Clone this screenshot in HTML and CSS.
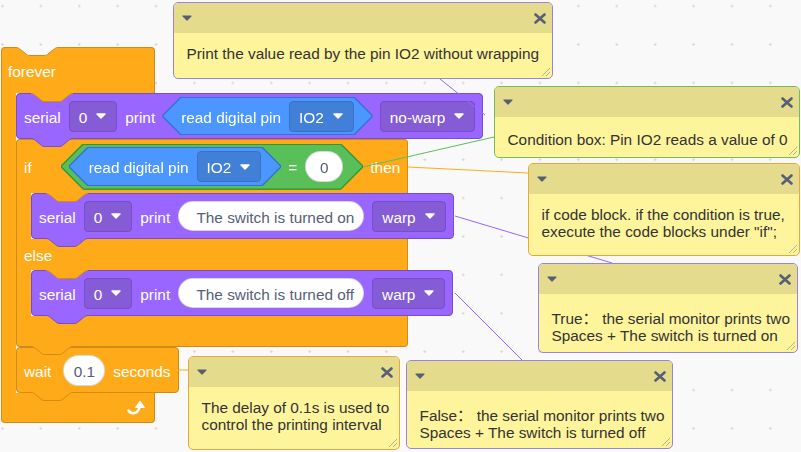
FILE: index.html
```html
<!DOCTYPE html>
<html>
<head>
<meta charset="utf-8">
<link rel="stylesheet" href="styles.css">
</head>
<body>
<div class="workspace">
  <div class="script">
    <div class="cblock">
      <div class="chead fhead orange">
        <svg class="dent" width="42" height="10" viewBox="0 0 42 10"><path class="f-canvas" d="M0,0 L42,0 L42,0.5 C40,0.5 39,1.5 37.5,2.5 L32,7 C31,8 30,8.5 28,8.5 H14 C12,8.5 11,8 10,7 L4.5,2.5 C3,1.5 2,0.5 0,0.5 Z"/><path class="s-orange" d="M0,0.5 C2,0.5 3,1.5 4.5,2.5 L10,7 C11,8 12,8.5 14,8.5 H28 C30,8.5 31,8 32,7 L37.5,2.5 C39,1.5 40,0.5 42,0.5"/></svg>
        <span class="lbl">forever</span>
        <svg class="tab tab-arm" width="42" height="10" viewBox="0 0 42 10"><path class="f-orange" d="M0,0 L42,0 L42,0.5 C40,0.5 39,1.5 37.5,2.5 L32,7 C31,8 30,8.5 28,8.5 H14 C12,8.5 11,8 10,7 L4.5,2.5 C3,1.5 2,0.5 0,0.5 Z"/><path class="s-orange" d="M0,0.5 C2,0.5 3,1.5 4.5,2.5 L10,7 C11,8 12,8.5 14,8.5 H28 C30,8.5 31,8 32,7 L37.5,2.5 C39,1.5 40,0.5 42,0.5"/></svg>
      </div>
      <div class="cbody">
        <div class="arm"></div>
        <div class="stack">
          <div class="blk purple">
            <span class="lbl">serial</span>
            <span class="dd dd-purple">0<svg class="caret" width="10" height="6" viewBox="0 0 10 6"><path d="M1,1 L9,1 L5,5 Z"/></svg></span>
            <span class="lbl">print</span>
            <span class="hexw hexw-blue"><span class="hex hex-blue">
              <span class="lbl">read digital pin</span>
              <span class="dd dd-blue">IO2<svg class="caret" width="10" height="6" viewBox="0 0 10 6"><path d="M1,1 L9,1 L5,5 Z"/></svg></span>
            </span></span>
            <span class="dd dd-purple">no-warp<svg class="caret" width="10" height="6" viewBox="0 0 10 6"><path d="M1,1 L9,1 L5,5 Z"/></svg></span>
            <svg class="tab" width="42" height="10" viewBox="0 0 42 10"><path class="f-purple" d="M0,0 L42,0 L42,0.5 C40,0.5 39,1.5 37.5,2.5 L32,7 C31,8 30,8.5 28,8.5 H14 C12,8.5 11,8 10,7 L4.5,2.5 C3,1.5 2,0.5 0,0.5 Z"/><path class="s-purple" d="M0,0.5 C2,0.5 3,1.5 4.5,2.5 L10,7 C11,8 12,8.5 14,8.5 H28 C30,8.5 31,8 32,7 L37.5,2.5 C39,1.5 40,0.5 42,0.5"/></svg>
          </div>

          <div class="cblock">
            <div class="chead ihead orange">
              <span class="lbl lbl-if">if</span>
              <span class="hexw hexw-green"><span class="hex hex-green">
                <span class="hexw hexw-blue"><span class="hex hex-blue hex-blue2">
                  <span class="lbl">read digital pin</span>
                  <span class="dd dd-blue">IO2<svg class="caret" width="10" height="6" viewBox="0 0 10 6"><path d="M1,1 L9,1 L5,5 Z"/></svg></span>
                </span></span>
                <span class="lbl">=</span>
                <span class="oval oval-num">0</span>
              </span></span>
              <span class="lbl">then</span>
              <svg class="tab tab-arm" width="42" height="10" viewBox="0 0 42 10"><path class="f-orange" d="M0,0 L42,0 L42,0.5 C40,0.5 39,1.5 37.5,2.5 L32,7 C31,8 30,8.5 28,8.5 H14 C12,8.5 11,8 10,7 L4.5,2.5 C3,1.5 2,0.5 0,0.5 Z"/><path class="s-orange" d="M0,0.5 C2,0.5 3,1.5 4.5,2.5 L10,7 C11,8 12,8.5 14,8.5 H28 C30,8.5 31,8 32,7 L37.5,2.5 C39,1.5 40,0.5 42,0.5"/></svg>
            </div>
            <div class="cbody">
              <div class="arm"></div>
              <div class="stack">
                <div class="blk purple">
                  <span class="lbl">serial</span>
                  <span class="dd dd-purple">0<svg class="caret" width="10" height="6" viewBox="0 0 10 6"><path d="M1,1 L9,1 L5,5 Z"/></svg></span>
                  <span class="lbl">print</span>
                  <span class="oval oval-text">  The switch is turned on</span>
                  <span class="dd dd-purple">warp<svg class="caret" width="10" height="6" viewBox="0 0 10 6"><path d="M1,1 L9,1 L5,5 Z"/></svg></span>
                  <svg class="tab" width="42" height="10" viewBox="0 0 42 10"><path class="f-purple" d="M0,0 L42,0 L42,0.5 C40,0.5 39,1.5 37.5,2.5 L32,7 C31,8 30,8.5 28,8.5 H14 C12,8.5 11,8 10,7 L4.5,2.5 C3,1.5 2,0.5 0,0.5 Z"/><path class="s-purple" d="M0,0.5 C2,0.5 3,1.5 4.5,2.5 L10,7 C11,8 12,8.5 14,8.5 H28 C30,8.5 31,8 32,7 L37.5,2.5 C39,1.5 40,0.5 42,0.5"/></svg>
                </div>
              </div>
            </div>
            <div class="cmid orange">
              <span class="lbl">else</span>
              <svg class="tab tab-arm" width="42" height="10" viewBox="0 0 42 10"><path class="f-orange" d="M0,0 L42,0 L42,0.5 C40,0.5 39,1.5 37.5,2.5 L32,7 C31,8 30,8.5 28,8.5 H14 C12,8.5 11,8 10,7 L4.5,2.5 C3,1.5 2,0.5 0,0.5 Z"/><path class="s-orange" d="M0,0.5 C2,0.5 3,1.5 4.5,2.5 L10,7 C11,8 12,8.5 14,8.5 H28 C30,8.5 31,8 32,7 L37.5,2.5 C39,1.5 40,0.5 42,0.5"/></svg>
            </div>
            <div class="cbody">
              <div class="arm"></div>
              <div class="stack">
                <div class="blk purple">
                  <span class="lbl">serial</span>
                  <span class="dd dd-purple">0<svg class="caret" width="10" height="6" viewBox="0 0 10 6"><path d="M1,1 L9,1 L5,5 Z"/></svg></span>
                  <span class="lbl">print</span>
                  <span class="oval oval-text">  The switch is turned off</span>
                  <span class="dd dd-purple">warp<svg class="caret" width="10" height="6" viewBox="0 0 10 6"><path d="M1,1 L9,1 L5,5 Z"/></svg></span>
                  <svg class="tab" width="42" height="10" viewBox="0 0 42 10"><path class="f-purple" d="M0,0 L42,0 L42,0.5 C40,0.5 39,1.5 37.5,2.5 L32,7 C31,8 30,8.5 28,8.5 H14 C12,8.5 11,8 10,7 L4.5,2.5 C3,1.5 2,0.5 0,0.5 Z"/><path class="s-purple" d="M0,0.5 C2,0.5 3,1.5 4.5,2.5 L10,7 C11,8 12,8.5 14,8.5 H28 C30,8.5 31,8 32,7 L37.5,2.5 C39,1.5 40,0.5 42,0.5"/></svg>
                </div>
              </div>
            </div>
            <div class="cfoot ifoot orange">
              <svg class="tab" width="42" height="10" viewBox="0 0 42 10"><path class="f-orange" d="M0,0 L42,0 L42,0.5 C40,0.5 39,1.5 37.5,2.5 L32,7 C31,8 30,8.5 28,8.5 H14 C12,8.5 11,8 10,7 L4.5,2.5 C3,1.5 2,0.5 0,0.5 Z"/><path class="s-orange" d="M0,0.5 C2,0.5 3,1.5 4.5,2.5 L10,7 C11,8 12,8.5 14,8.5 H28 C30,8.5 31,8 32,7 L37.5,2.5 C39,1.5 40,0.5 42,0.5"/></svg>
            </div>
          </div>

          <div class="blk orange wait">
            <span class="lbl lbl-wait">wait</span>
            <span class="oval oval-num">0.1</span>
            <span class="lbl">seconds</span>
            <svg class="tab" width="42" height="10" viewBox="0 0 42 10"><path class="f-orange" d="M0,0 L42,0 L42,0.5 C40,0.5 39,1.5 37.5,2.5 L32,7 C31,8 30,8.5 28,8.5 H14 C12,8.5 11,8 10,7 L4.5,2.5 C3,1.5 2,0.5 0,0.5 Z"/><path class="s-orange" d="M0,0.5 C2,0.5 3,1.5 4.5,2.5 L10,7 C11,8 12,8.5 14,8.5 H28 C30,8.5 31,8 32,7 L37.5,2.5 C39,1.5 40,0.5 42,0.5"/></svg>
          </div>
        </div>
      </div>
      <div class="cfoot ffoot orange">
        <svg class="loop" width="20" height="17" viewBox="0 0 20 17"><path d="M1.5,11.5 C4,15.5 11,15.5 12.5,8" fill="none" stroke="#fff" stroke-width="2.6" stroke-linecap="round"/><path d="M8.5,8.5 L13,2 L17.5,8.5 Z" fill="#fff" stroke="#fff" stroke-width="1" stroke-linejoin="round"/></svg>
      </div>
    </div>
  </div>

  <svg class="links" width="801" height="452" viewBox="0 0 801 452">
    <line x1="485" y1="115" x2="440" y2="79" class="ln-purple"/>
    <line x1="363" y1="167" x2="494" y2="137" class="ln-green"/>
    <line x1="408" y1="167" x2="528" y2="173" class="ln-orange"/>
    <line x1="455" y1="216" x2="612" y2="263" class="ln-purple"/>
    <line x1="455" y1="293" x2="522" y2="360" class="ln-purple"/>
    <line x1="177" y1="370" x2="188" y2="370" class="ln-orange"/>
  </svg>

  <div class="comment cm1 b-purple">
    <div class="cm-head"><svg class="cm-tri" width="10" height="6" viewBox="0 0 10 6"><path d="M1,1 L9,1 L5,5 Z"/></svg><svg class="cm-x" width="12" height="11" viewBox="0 0 12 11"><path d="M1.5,1.5 L10.5,9.5 M10.5,1.5 L1.5,9.5"/></svg></div>
    <div class="cm-body">Print the value read by the pin IO2 without wrapping</div>
    <svg class="cm-grip" width="11" height="11" viewBox="0 0 11 11"><path d="M10,2 L2,10 M10,6 L6,10"/></svg>
  </div>

  <div class="comment cm2 b-green">
    <div class="cm-head"><svg class="cm-tri" width="10" height="6" viewBox="0 0 10 6"><path d="M1,1 L9,1 L5,5 Z"/></svg><svg class="cm-x" width="12" height="11" viewBox="0 0 12 11"><path d="M1.5,1.5 L10.5,9.5 M10.5,1.5 L1.5,9.5"/></svg></div>
    <div class="cm-body pad-m">Condition box: Pin IO2 reads a value of 0</div>
    <svg class="cm-grip" width="11" height="11" viewBox="0 0 11 11"><path d="M10,2 L2,10 M10,6 L6,10"/></svg>
  </div>

  <div class="comment cm3 b-orange">
    <div class="cm-head"><svg class="cm-tri" width="10" height="6" viewBox="0 0 10 6"><path d="M1,1 L9,1 L5,5 Z"/></svg><svg class="cm-x" width="12" height="11" viewBox="0 0 12 11"><path d="M1.5,1.5 L10.5,9.5 M10.5,1.5 L1.5,9.5"/></svg></div>
    <div class="cm-body">if code block. if the condition is true,<br>execute the code blocks under "if";</div>
    <svg class="cm-grip" width="11" height="11" viewBox="0 0 11 11"><path d="M10,2 L2,10 M10,6 L6,10"/></svg>
  </div>

  <div class="comment cm4 b-purple">
    <div class="cm-head"><svg class="cm-tri" width="10" height="6" viewBox="0 0 10 6"><path d="M1,1 L9,1 L5,5 Z"/></svg><svg class="cm-x" width="12" height="11" viewBox="0 0 12 11"><path d="M1.5,1.5 L10.5,9.5 M10.5,1.5 L1.5,9.5"/></svg></div>
    <div class="cm-body pad-l">True： the serial monitor prints two<br>Spaces + The switch is turned on</div>
    <svg class="cm-grip" width="11" height="11" viewBox="0 0 11 11"><path d="M10,2 L2,10 M10,6 L6,10"/></svg>
  </div>

  <div class="comment cm5 b-orange">
    <div class="cm-head"><svg class="cm-tri" width="10" height="6" viewBox="0 0 10 6"><path d="M1,1 L9,1 L5,5 Z"/></svg><svg class="cm-x" width="12" height="11" viewBox="0 0 12 11"><path d="M1.5,1.5 L10.5,9.5 M10.5,1.5 L1.5,9.5"/></svg></div>
    <div class="cm-body">The delay of 0.1s is used to<br>control the printing interval</div>
    <svg class="cm-grip" width="11" height="11" viewBox="0 0 11 11"><path d="M10,2 L2,10 M10,6 L6,10"/></svg>
  </div>

  <div class="comment cm6 b-purple">
    <div class="cm-head"><svg class="cm-tri" width="10" height="6" viewBox="0 0 10 6"><path d="M1,1 L9,1 L5,5 Z"/></svg><svg class="cm-x" width="12" height="11" viewBox="0 0 12 11"><path d="M1.5,1.5 L10.5,9.5 M10.5,1.5 L1.5,9.5"/></svg></div>
    <div class="cm-body pad-l">False： the serial monitor prints two<br>Spaces + The switch is turned off</div>
    <svg class="cm-grip" width="11" height="11" viewBox="0 0 11 11"><path d="M10,2 L2,10 M10,6 L6,10"/></svg>
  </div>
</div>
</body>
</html>
```

FILE: styles.css
```css
* { box-sizing: border-box; }
html, body { margin: 0; padding: 0; }
body {
  width: 801px;
  height: 452px;
  overflow: hidden;
  background: #F9F9F9;
  font-family: "Liberation Sans", Arial, "Noto Sans CJK SC", sans-serif;
}
.workspace {
  position: relative;
  width: 801px;
  height: 452px;
  overflow: hidden;
  background-color: #F9F9F9;
  background-image: radial-gradient(circle, #d4d4d4 0.9px, rgba(249,249,249,0) 1.4px);
  background-size: 38.4px 38.4px;
  background-position: -16.7px 25.3px;
}

/* ---------- blocks ---------- */
.script { position: absolute; left: 1px; top: 47px; }
.cblock { display: flex; flex-direction: column; align-items: flex-start; }
.cbody { display: flex; align-items: stretch; }
.stack { display: flex; flex-direction: column; align-items: flex-start; }
.arm {
  width: 15px;
  flex-shrink: 0;
  background: #FFAB19;
  border-left: 1px solid #CF8B17;
}
.orange { background: #FFAB19; border-color: #CF8B17; }
.purple { background: #9966FF; border-color: #774DCB; }

.chead, .cmid, .cfoot, .blk {
  position: relative;
  display: flex;
  align-items: center;
  border-style: solid;
  border-width: 1px;
}
.chead { border-bottom-width: 0; border-radius: 4px 4px 0 0; padding-left: 6px; gap: 8px; }
.fhead { width: 154px; height: 46px; }
.ihead { width: 392px; height: 54px; padding-left: 7px; }
.cmid { width: 392px; height: 31px; border-top-width: 0; border-bottom-width: 0; padding-left: 7px; }
.cfoot { border-top-width: 0; border-radius: 0 0 4px 4px; }
.ifoot { width: 392px; height: 31px; }
.ffoot { width: 154px; height: 30px; justify-content: flex-end; padding-right: 7px; }
.blk { height: 46px; padding: 0 7px; gap: 8px; border-radius: 4px; }

.lbl {
  color: #fff;
  font-size: 15.36px;
  line-height: 18px;
  padding-top: 3px;
  white-space: pre;
}
.lbl-if { margin-right: 22px; }
.lbl-wait { margin-right: 4px; }

.dd {
  display: flex;
  align-items: center;
  gap: 9px;
  height: 31px;
  padding: 3px 10px 0 9px;
  border: 1px solid;
  border-radius: 4px;
  color: #fff;
  font-size: 15.36px;
  white-space: pre;
}
.dd-purple { background: #855CD6; border-color: #774DCB; }
.dd-blue { background: #4280D7; border-color: #3373CC; }
.caret { margin-top: -3px; }
.caret path { fill: #fff; stroke: #fff; stroke-width: 1.4; stroke-linejoin: round; }

.oval {
  display: flex;
  align-items: center;
  justify-content: center;
  height: 31px;
  padding: 3px 9px 0;
  border-radius: 16px;
  background: #fff;
  border: 1px solid rgba(0,0,0,0.15);
  color: #575E75;
  font-size: 15.36px;
  white-space: pre;
}
.oval-num { min-width: 38px; padding: 3px 9px 0; }
.oval-text { height: 30px; }
.wait .oval-num { min-width: 42px; }

.hexw { display: flex; }
.hexw-blue {
  filter: drop-shadow(1px 0 0 #3373CC) drop-shadow(-1px 0 0 #3373CC) drop-shadow(0 1px 0 #3373CC) drop-shadow(0 -1px 0 #3373CC);
}
.hexw-green {
  filter: drop-shadow(1px 0 0 #389438) drop-shadow(-1px 0 0 #389438) drop-shadow(0 1px 0 #389438) drop-shadow(0 -1px 0 #389438);
}
.hex { display: flex; align-items: center; gap: 8px; }
.hex-blue {
  height: 36px;
  padding: 0 18px;
  background: #4C97FF;
  clip-path: polygon(18px 0, calc(100% - 18px) 0, 100% 50%, calc(100% - 18px) 100%, 18px 100%, 0 50%);
}
.hex-blue2 {
  height: 37px;
  padding: 0 19px;
  clip-path: polygon(18.5px 0, calc(100% - 18.5px) 0, 100% 50%, calc(100% - 18.5px) 100%, 18.5px 100%, 0 50%);
}
.hex-green {
  height: 44px;
  padding: 0 19px 0 8px;
  background: #59C059;
  clip-path: polygon(22px 0, calc(100% - 22px) 0, 100% 50%, calc(100% - 22px) 100%, 22px 100%, 0 50%);
}

/* notch tabs */
.tab, .dent { position: absolute; overflow: visible; z-index: 1; }
.tab { left: 14px; top: 100%; }
.tab-arm { left: 29px; }
.chead .tab { top: 100%; }
.dent { left: 14px; top: -1px; }
.f-canvas { fill: #F9F9F9; }
.f-orange { fill: #FFAB19; }
.f-purple { fill: #9966FF; }
.s-orange, .s-purple { fill: none; stroke-width: 1; }
.s-orange { stroke: #CF8B17; }
.s-purple { stroke: #774DCB; }

/* ---------- links ---------- */
.links { position: absolute; left: 0; top: 0; z-index: 2; }
.links line { stroke-width: 1; }
.ln-purple { stroke: #9966FF; }
.ln-green { stroke: #59C059; }
.ln-orange { stroke: #FFAB19; }

/* ---------- comments ---------- */
.comment {
  position: absolute;
  z-index: 3;
  display: flex;
  flex-direction: column;
  border: 1px solid;
  border-radius: 5px;
  background: #FEF49C;
  overflow: hidden;
}
.b-purple { border-color: #9A82E2; }
.b-green { border-color: #72BC5E; }
.b-orange { border-color: #E6A93C; }
.cm1 { left: 173px; top: 2px; width: 380px; height: 77px; }
.cm2 { left: 494px; top: 86px; width: 306px; height: 72px; }
.cm3 { left: 528px; top: 163px; width: 272px; height: 93px; }
.cm4 { left: 538px; top: 263px; width: 260px; height: 90px; }
.cm5 { left: 188px; top: 356px; width: 212px; height: 94px; }
.cm6 { left: 406px; top: 360px; width: 267px; height: 89px; }

.cm-head {
  flex-shrink: 0;
  height: 30px;
  background: #E4DB8C;
  display: flex;
  align-items: center;
  justify-content: space-between;
  padding: 0 6px 0 8px;
}
.cm-tri path { fill: #575E75; stroke: #575E75; stroke-width: 1.2; stroke-linejoin: round; }
.cm-x path { fill: none; stroke: #575E75; stroke-width: 2.6; stroke-linecap: round; }
.cm-body {
  padding: 12px 8px 0 12.5px;
  font-size: 15.36px;
  line-height: 17px;
  color: #333;
  white-space: nowrap;
}
.pad-m { padding-top: 13.5px; }
.pad-l { padding-top: 15.5px; }
.cm-grip { position: absolute; right: 1px; bottom: 1px; }
.cm-grip path { fill: none; stroke: #B9B18A; stroke-width: 1; }
```
